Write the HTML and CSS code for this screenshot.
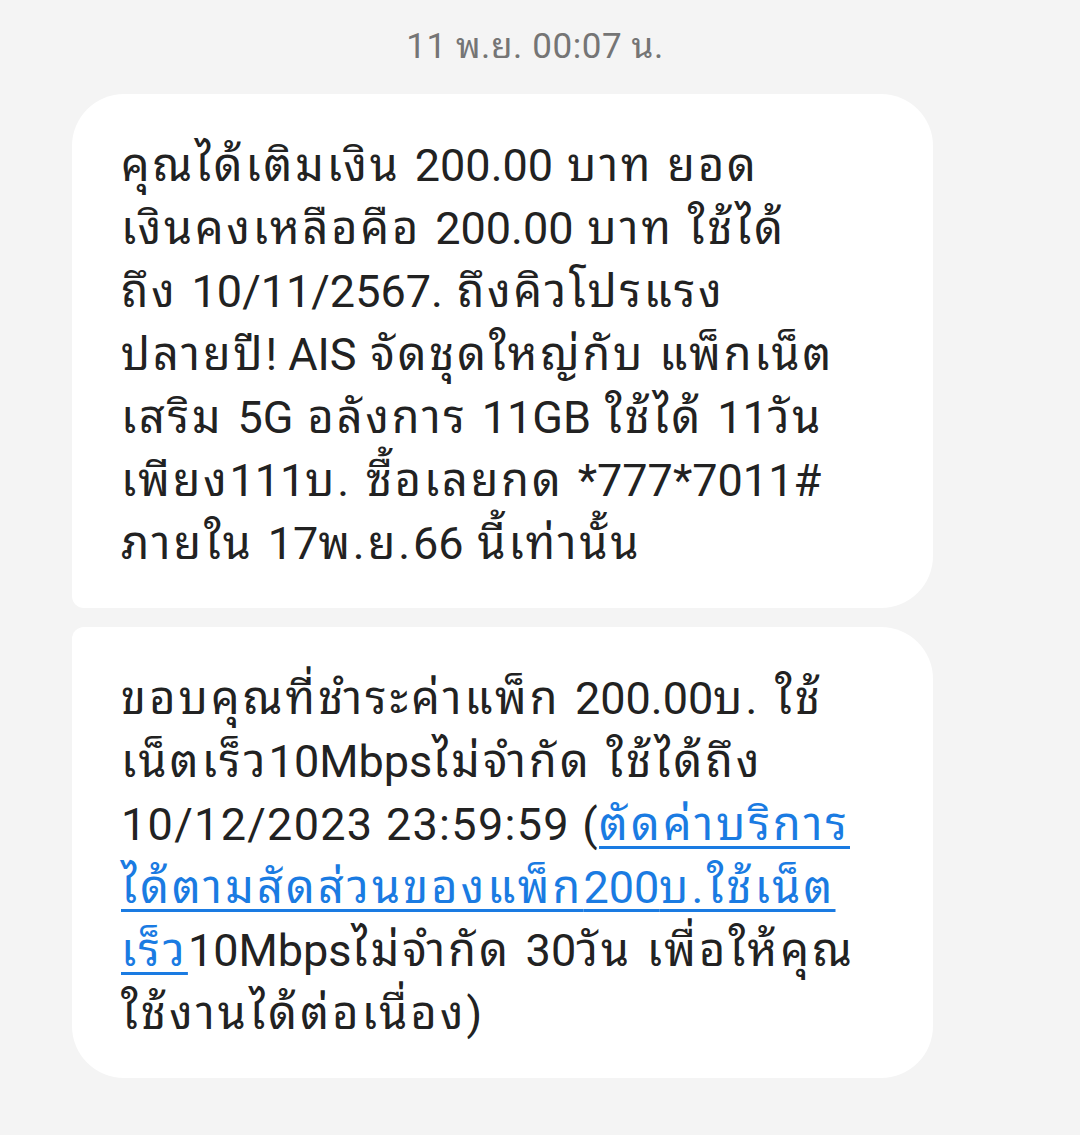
FILE: index.html
```html
<!DOCTYPE html>
<html lang="th">
<head>
  <meta charset="UTF-8" />
  <meta name="viewport" content="width=device-width, initial-scale=1.0" />
  <title>ข้อความ AIS</title>
  <link rel="stylesheet" href="styles.css">
</head>
<body>
  <main class="thread">
    <div class="time">11 พ.ย. 00:07 น.</div>

    <div class="bubble first">
      <p>คุณได้เติมเงิน <span class="n">200.00</span> บาท ยอด<br>
      เงินคงเหลือคือ <span class="n">200.00</span> บาท ใช้ได้<br>
      ถึง <span class="n">10/11/2567.</span> ถึงคิวโปรแรง<br>
      ปลายปี<span class="n">! AIS</span> จัดชุดใหญ่กับ แพ็กเน็ต<br>
      เสริม <span class="n">5G</span> อลังการ <span class="n">11GB</span> ใช้ได้ <span class="n">11</span>วัน<br>
      เพียง<span class="n">111</span>บ. ซื้อเลยกด <span class="n">*777*7011#</span><br>
      ภายใน <span class="n">17</span>พ.ย.<span class="n">66</span> นี้เท่านั้น</p>
    </div>

    <div class="bubble last">
      <p>ขอบคุณที่ชำระค่าแพ็ก <span class="n">200.00</span>บ. ใช้<br>
      เน็ตเร็ว<span class="n">10Mbps</span>ไม่จำกัด ใช้ได้ถึง<br>
      <span class="n date">10/12/2023 23:59:59 (</span><a href="#">ตัดค่าบริการ<br>
      ได้ตามสัดส่วนของแพ็ก<span class="n">200</span>บ.ใช้เน็ต<br>
      เร็ว</a><span class="n">10Mbps</span>ไม่จำกัด <span class="n">30</span>วัน เพื่อให้คุณ<br>
      ใช้งานได้ต่อเนื่อง<span class="n">)</span></p>
    </div>
  </main>
</body>
</html>
```

FILE: styles.css
```css
body {
  margin: 0;
  padding: 0;
  background-color: #f4f4f4;
  font-family: Roboto, "Noto Sans Thai Looped", "Noto Serif Thai", "Noto Sans Thai", sans-serif;
  color: #222;
}
.thread {
  display: flex;
  flex-direction: column;
  gap: 19px;
  padding: 0 147px 40px 72px;
}
.time {
  margin: 0 -147px -19px -72px;
  padding: 27px 10px 27px 0;
  line-height: 40px;
  font-size: 35px;
  letter-spacing: 0.6px;
  color: #757575;
  text-align: center;
}
.bubble {
  background-color: white;
  border-radius: 52px;
  padding: 40px 40px 33px 49px;
}
.bubble.first {
  border-bottom-left-radius: 12px;
}
.bubble.last {
  border-top-left-radius: 12px;
}
.bubble p {
  margin: 0;
  font-size: 45px;
  line-height: 63px;
  letter-spacing: 2.9px;
  white-space: nowrap;
}
.bubble.last p {
  letter-spacing: 3.2px;
}
.bubble .n {
  letter-spacing: 0;
}
.bubble .date {
  letter-spacing: 1.3px;
}
.bubble a {
  color: #1a7be2;
  text-decoration: underline;
  text-decoration-thickness: 3px;
  text-underline-offset: 6px;
}
```
